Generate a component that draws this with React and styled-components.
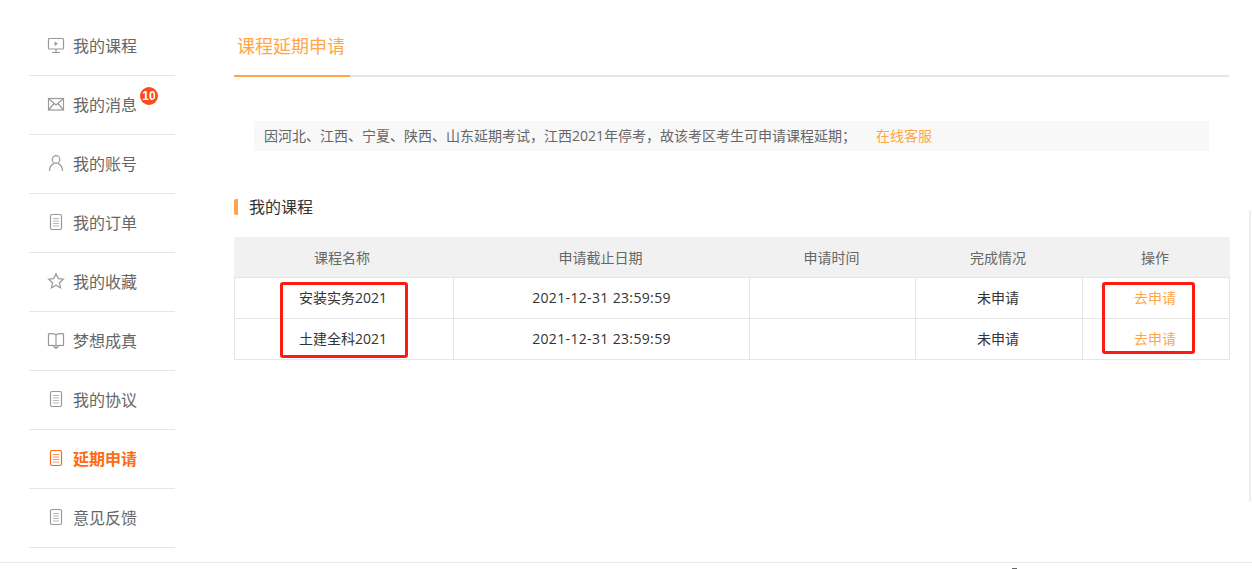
import React from "react";
import styled, { createGlobalStyle } from "styled-components";

const GlobalStyle = createGlobalStyle`
  html, body {
    margin: 0;
    padding: 0;
    background: #fff;
    overflow: hidden;
  }
  body {
    font-family: "Open Sans", "Noto Sans CJK SC", sans-serif;
  }
`;

const Page = styled.div`
  position: relative;
  width: 1252px;
  height: 569px;
  overflow: hidden;
`;

const Layout = styled.div`
  display: flex;
  height: 563px;
  border-bottom: 1px solid #eaeaea;
  box-sizing: border-box;
  padding: 17px 0 0 29px;
`;

const Sidebar = styled.ul`
  list-style: none;
  margin: 0;
  padding: 0;
  width: 146px;
  flex: none;
`;

const NavItem = styled.li`
  position: relative;
  display: flex;
  align-items: center;
  height: 59px;
  box-sizing: border-box;
  border-bottom: 1px solid #e6e6e6;
  padding: 0 0 3px 18px;
  font-size: 16px;
  font-weight: ${(p) => (p.$active ? 700 : 400)};
  color: ${(p) => (p.$active ? "#ff6a13" : "#666")};
`;

const NavIcon = styled.svg`
  width: 18px;
  height: 18px;
  margin-right: 8px;
  flex: none;
  fill: none;
  stroke: ${(p) => (p.$active ? "#ff6a13" : "#999")};
  stroke-width: 1.2;
`;

const Badge = styled.span`
  position: absolute;
  left: 111px;
  top: 11px;
  width: 18px;
  height: 18px;
  border-radius: 50%;
  background: #fc4a1f;
  color: #fff;
  font: 700 12px/18px "Liberation Sans", sans-serif;
  text-align: center;
`;

const Main = styled.main`
  width: 995px;
  margin-left: 59px;
  flex: none;
`;

const TabBar = styled.div`
  display: flex;
  height: 58px;
  border-bottom: 2px solid #e6e6e6;
`;

const Tab = styled.div`
  width: 113px;
  height: 58px;
  border-bottom: 2px solid #ffa647;
  padding-left: 3px;
  font-size: 18px;
  line-height: 58px;
  color: #ffa647;
`;

const Notice = styled.div`
  display: flex;
  align-items: center;
  height: 30px;
  box-sizing: border-box;
  margin: 44px 20px 0;
  padding: 0 0 2px 10px;
  background: #f8f8f8;
  font-size: 14px;
  color: #666;
`;

const ServiceLink = styled.a`
  margin-left: 20px;
  color: #ffa647;
`;

const SectionTitle = styled.h3`
  margin: 48px 0 22px;
  height: 16px;
  border-left: 4px solid #ffa647;
  border-radius: 2px;
  padding-left: 11px;
  font-size: 16px;
  font-weight: 400;
  line-height: 17px;
  color: #333;
`;

const Table = styled.table`
  width: 995px;
  border-collapse: collapse;
  table-layout: fixed;
  font-size: 14px;
`;

const HeadCell = styled.th`
  height: 40px;
  padding: 0 ${(p) => p.$shift}px 2px 0;
  box-sizing: border-box;
  background: #f1f1f1;
  border: 1px solid #f1f1f1;
  border-bottom-color: #e6e6e6;
  font-weight: 400;
  color: #666;
`;

const Cell = styled.td`
  height: 41px;
  padding: 0 ${(p) => p.$shift}px 2px 0;
  box-sizing: border-box;
  border: 1px solid #e6e6e6;
  text-align: center;
  letter-spacing: ${(p) => (p.$date ? "0.35px" : "0")};
  color: ${(p) => (p.$link ? "#ffa647" : "#333")};
`;

const Marker = styled.div`
  position: absolute;
  left: ${(p) => p.$left}px;
  top: 282px;
  width: ${(p) => p.$width}px;
  height: ${(p) => p.$height}px;
  box-sizing: border-box;
  border: 3px solid #fb1b10;
  border-radius: 3px;
`;

const EdgeLine = styled.div`
  position: absolute;
  left: 1249px;
  top: 210px;
  width: 2px;
  height: 292px;
  background: #efefef;
`;

const FooterSpeck = styled.div`
  position: absolute;
  left: 1012px;
  top: 568px;
  width: 5px;
  height: 1px;
  background: #666;
`;

const doc = (
  <>
    <rect x="3.5" y="1.5" width="11" height="15" rx="1.5" />
    <path d="M6 5.500h6M6 8h6M6 10.500h6M6 13h6" strokeOpacity="0.7" />
  </>
);

const icons = {
  course: (
    <>
      <rect x="1.5" y="2.5" width="15" height="10.5" rx="1" />
      <path d="M9 13v3M5 16.5h8" />
      <path d="M7.5 5.5l3.5 2.2-3.5 2.2z" fill="#999" stroke="none" />
    </>
  ),
  mail: (
    <>
      <rect x="1.5" y="3.5" width="15" height="11.5" />
      <path d="M1.5 3.5L9 10l7.5-6.5M1.5 15l5.5-6.5M16.5 15L11 8.5" />
    </>
  ),
  user: (
    <>
      <circle cx="9" cy="5.5" r="3.8" />
      <path d="M2.5 17c0-4 2.2-6.5 4.5-7.6M15.5 17c0-4-2.200-6.500-4.500-7.600" />
    </>
  ),
  doc,
  star: (
    <path d="M9 1.800l2.200 4.800 5.200.6-3.900 3.500 1.100 5.200L9 13.300 4.400 15.900l1.100-5.200L1.600 7.200l5.200-.6z" />
  ),
  book: (
    <>
      <path d="M9 3.500C7.500 2.800 4 2.500 1.500 2.800v11.700c2.500-.3 6 0 7.500.5zM9 3.500c1.500-.7 5-1 7.500-.7v11.700c-2.500-.3-6 0-7.500.5z" />
      <path d="M6.500 15.500L9 17.500l2.500-2" />
    </>
  ),
};

const navItems = [
  { label: "我的课程", icon: "course" },
  { label: "我的消息", icon: "mail", badge: 10 },
  { label: "我的账号", icon: "user" },
  { label: "我的订单", icon: "doc" },
  { label: "我的收藏", icon: "star" },
  { label: "梦想成真", icon: "book" },
  { label: "我的协议", icon: "doc" },
  { label: "延期申请", icon: "doc", active: true },
  { label: "意见反馈", icon: "doc" },
];

const columns = [
  { title: "课程名称", width: 219, shift: 4 },
  { title: "申请截止日期", width: 296, shift: 2 },
  { title: "申请时间", width: 166, shift: 2 },
  { title: "完成情况", width: 167, shift: 2 },
  { title: "操作", width: 147, shift: 2 },
];

const courses = ["安装实务2021", "土建全科2021"];

const App = () => {
  return (
    <Page>
      <GlobalStyle />
      <Layout>
        <Sidebar>
          {navItems.map((item) => (
            <NavItem key={item.label} $active={item.active}>
              <NavIcon viewBox="0 0 18 18" $active={item.active}>
                {icons[item.icon]}
              </NavIcon>
              {item.label}
              {item.badge && <Badge>{item.badge}</Badge>}
            </NavItem>
          ))}
        </Sidebar>
        <Main>
          <TabBar>
            <Tab>课程延期申请</Tab>
          </TabBar>
          <Notice>
            因河北、江西、宁夏、陕西、山东延期考试，江西2021年停考，故该考区考生可申请课程延期；
            <ServiceLink>在线客服</ServiceLink>
          </Notice>
          <SectionTitle>我的课程</SectionTitle>
          <Table>
            <colgroup>
              {columns.map((c) => (
                <col key={c.title} width={c.width} />
              ))}
            </colgroup>
            <thead>
              <tr>
                {columns.map((c) => (
                  <HeadCell key={c.title} $shift={c.shift}>
                    {c.title}
                  </HeadCell>
                ))}
              </tr>
            </thead>
            <tbody>
              {courses.map((name) => (
                <tr key={name}>
                  <Cell $shift={2}>{name}</Cell>
                  <Cell $date $shift={0}>
                    2021-12-31 23:59:59
                  </Cell>
                  <Cell $shift={0} />
                  <Cell $shift={2}>未申请</Cell>
                  <Cell $link $shift={2}>
                    去申请
                  </Cell>
                </tr>
              ))}
            </tbody>
          </Table>
        </Main>
      </Layout>
      <Marker $left={280} $width={128} $height={76} />
      <Marker $left={1102} $width={93} $height={72} />
      <EdgeLine />
      <FooterSpeck />
    </Page>
  );
};

export default App;
